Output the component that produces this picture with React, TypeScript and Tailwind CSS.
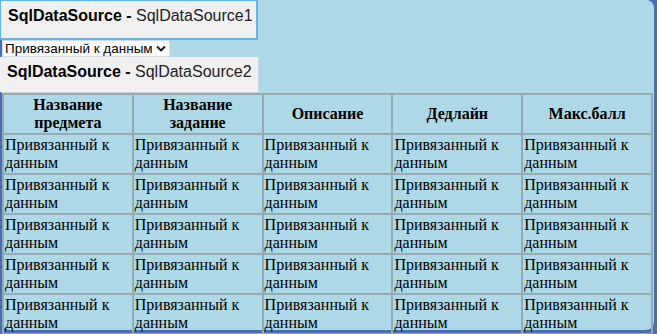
import React from 'react';

const headers = ['Название предмета', 'Название задание', 'Описание', 'Дедлайн', 'Макс.балл'];
const rows = [1, 2, 3, 4, 5];

const App: React.FC = () => {
  return (
    <div className="w-[657px] h-[334px] bg-[#4a6db5] pt-[2px] pr-[3px] pb-[2px] pl-[2px] font-['Liberation_Sans',Arial,sans-serif]">
      <div className="h-full bg-[#add8e6] rounded-[8px] rounded-tl-none">
        <div className="-mt-[2px] -ml-[2px] w-[258px] h-[40px] bg-[#f0f0f0] border-t border-l border-r-2 border-b-2 border-[#62b3ea] pl-[7px] pt-[5px] text-[16px] leading-[20px] text-[#222]">
          <span className="font-bold text-black">SqlDataSource - </span>
          <span>SqlDataSource1</span>
        </div>
        <div className="flex items-center w-[168px] h-[17px] bg-white border border-[#d4dadd] pl-[2px] pr-[3px] text-[13.5px] leading-[15px] text-black">
          <span className="flex-1 whitespace-nowrap overflow-hidden">Привязанный к данным</span>
          <svg width="10" height="7" viewBox="0 0 10 7" className="shrink-0">
            <path d="M1 1.5 L5 5.5 L9 1.5" fill="none" stroke="#111" strokeWidth="1.8" />
          </svg>
        </div>
        <div className="-ml-[2px] w-[258px] h-[35px] bg-[#f0f0f0] shadow-[1px_1px_0_#c9d6dc] pl-[7px] pt-[5px] text-[16px] leading-[20px] text-[#222]">
          <span className="font-bold text-black">SqlDataSource - </span>
          <span>SqlDataSource2</span>
        </div>
        <table className="mt-[1px] w-[651px] border-collapse table-fixed font-['Liberation_Serif','Times_New_Roman',serif] text-black">
          <thead>
            <tr className="h-[40px]">
              {headers.map((h) => (
                <th key={h} className="border-2 border-[#98a9b0] px-[1px] text-[16px] leading-[18px] font-bold text-center align-middle">
                  {h}
                </th>
              ))}
            </tr>
          </thead>
          <tbody>
            {rows.map((r) => (
              <tr key={r} className="h-[40px]">
                {headers.map((h) => (
                  <td key={h} className="border-2 border-[#98a9b0] px-[1px] text-[16px] leading-[18px] align-top pt-[1px]">
                    Привязанный к данным
                  </td>
                ))}
              </tr>
            ))}
          </tbody>
        </table>
      </div>
    </div>
  );
};

export default App;
